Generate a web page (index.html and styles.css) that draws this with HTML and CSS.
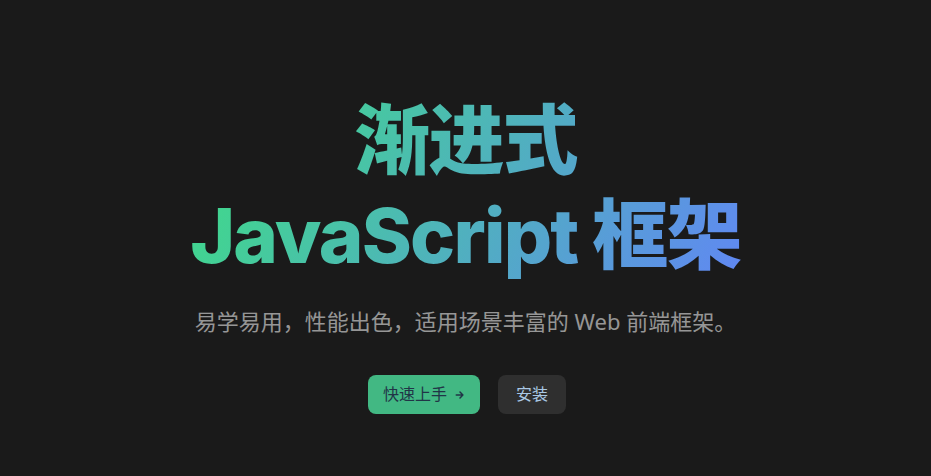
FILE: index.html
```html
<!DOCTYPE html>
<html lang="zh-CN">
<head>
  <meta charset="UTF-8" />
  <meta name="viewport" content="width=device-width, initial-scale=1" />
  <title>Vue.js - 渐进式 JavaScript 框架</title>
  <link rel="stylesheet" href="styles.css">
</head>
<body>

<section class="hero">
  <h1 class="tagline">渐进式<br>JavaScript 框架</h1>
  <p class="description">易学易用，性能出色，适用场景丰富的 Web 前端框架。</p>
  <div class="actions">
    <a class="btn get-started" href="#">快速上手
      <svg class="icon" viewBox="0 0 24 24" width="10" height="10">
        <path d="M3 12h16M12 5l7 7-7 7" fill="none" stroke="currentColor" stroke-width="3.6" stroke-linecap="round" stroke-linejoin="round"/>
      </svg>
    </a>
    <a class="btn setup" href="#">安装</a>
  </div>
</section>

</body>
</html>
```

FILE: styles.css
```css
body {
  margin: 0;
  background: #1a1a1a;
  font-family: "Noto Sans", "Noto Sans CJK SC", sans-serif;
  height: 100vh;
}
.hero {
  padding-top: 93px;
  text-align: center;
}
.tagline {
  margin: 0;
  font-family: Inter, "Noto Sans CJK SC", sans-serif;
  font-size: 76px;
  line-height: 95px;
  font-weight: 800;
  letter-spacing: -1.8px;
  background: linear-gradient(120deg, #42d392 15%, #647eff 110%);
  background-clip: text;
  -webkit-background-clip: text;
  color: transparent;
  display: inline-block;
}
.description {
  margin: 22px 0 0;
  font-size: 22px;
  line-height: 33px;
  color: rgba(235, 235, 235, 0.6);
}
.actions {
  margin-top: 37px;
  padding-left: 3px;
  display: flex;
  justify-content: center;
  gap: 18px;
}
.btn {
  display: inline-flex;
  align-items: center;
  font-size: 16px;
  line-height: 23px;
  font-weight: 400;
  padding: 8px 18px;
  border-radius: 8px;
  text-decoration: none;
}
.get-started {
  padding: 8px 15px;
  background: #42b883;
  color: #213547;
}
.get-started .icon {
  margin-left: 8px;
}
.setup {
  background: #2f2f2f;
  color: #aac8e4;
}
```
